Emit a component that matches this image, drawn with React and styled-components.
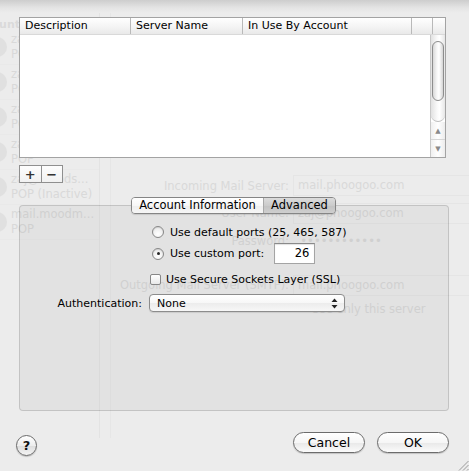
import React from 'react';
import styled, { createGlobalStyle } from 'styled-components';

const GlobalStyle = createGlobalStyle`
    html, body {
        margin: 0;
        padding: 0;
        background: #ececec;
    }
    body {
        font-family: "DejaVu Sans", "Liberation Sans", sans-serif;
        font-size: 11px;
        color: #000;
    }
`;

const Window = styled.div`
    position: relative;
    width: 469px;
    height: 471px;
    overflow: hidden;
    background: #ececec;
`;

/* ---------- faded preferences window behind the sheet ---------- */

const Backdrop = styled.div`
    display: flex;
    flex-direction: column;
    height: 100%;
    color: #d9d9d9;
`;

const TopShade = styled.div`
    height: 13px;
    flex: none;
    background: linear-gradient(#cdcdcd, #e4e4e4 60%, #ececec);
`;

const BackBody = styled.div`
    flex: 1;
    display: flex;
`;

const Sidebar = styled.div`
    width: 99px;
    flex: none;
    border-right: 1px solid #e3e3e3;
    height: 425px;
    overflow: hidden;
`;

const SideHead = styled.div`
    height: 17px;
    margin-left: -30px;
    line-height: 24px;
    font-weight: bold;
    color: #dadada;
`;

const AccountRow = styled.div`
    height: 35px;
    display: flex;
    align-items: center;
    gap: 4px;
    margin-left: -13px;
    border-bottom: 1px solid #e9e9e9;
    box-sizing: border-box;
`;

const AccountIcon = styled.div`
    width: 20px;
    height: 20px;
    border-radius: 50%;
    background: #e0e0e0;
    flex: none;
`;

const AccountText = styled.div`
    display: flex;
    flex-direction: column;
    line-height: 15px;
    white-space: nowrap;
    font-size: 11.5px;
`;

const BackMain = styled.div`
    flex: 1;
    margin-left: 10px;
    border-left: 1px solid #e6e6e6;
    height: 425px;
    padding-top: 159px;
    box-sizing: border-box;
`;

const GhostRow = styled.div`
    display: flex;
    align-items: center;
    height: ${p => p.h}px;
    white-space: nowrap;
    font-size: 11.5px;
`;

const GhostLabel = styled.div`
    width: 178px;
    flex: none;
    text-align: right;
    padding-right: 4px;
`;

const GhostField = styled.div`
    flex: 1;
    height: 19px;
    line-height: 19px;
    padding-left: 4px;
    border: 1px solid #e5e5e5;
    border-right: none;
`;

/* ---------- the sheet ---------- */

const Sheet = styled.div`
    position: absolute;
    inset: 0;
    padding: 17px 20px 0 19px;
    display: flex;
    flex-direction: column;
`;

const Table = styled.div`
    width: 427px;
    height: 141px;
    box-sizing: border-box;
    border: 1px solid #a3a3a3;
    background: #fff;
    display: flex;
    flex-direction: column;
    flex: none;
`;

const HeaderRow = styled.div`
    display: flex;
    height: 16px;
    flex: none;
    background: linear-gradient(#ffffff, #f4f4f4 55%, #e9e9e9);
    border-bottom: 1px solid #d9d9d9;
`;

const HeaderCell = styled.div`
    width: ${p => p.w}px;
    flex: ${p => (p.w ? 'none' : '1')};
    box-sizing: border-box;
    padding-left: 5px;
    line-height: 16px;
    border-right: ${p => (p.last ? 'none' : '1px solid #b9b9b9')};
    white-space: nowrap;
    overflow: hidden;
`;

const TableBody = styled.div`
    flex: 1;
    display: flex;
`;

const Rows = styled.div`
    flex: 1;
`;

const Scroller = styled.div`
    width: 14px;
    flex: none;
    display: flex;
    flex-direction: column;
    border-left: 1px solid #c8c8c8;
    background: #fff;
`;

const Track = styled.div`
    flex: 1;
    padding: 6px 1px 0 1px;
    background: linear-gradient(90deg, #e2e2e2, #fafafa 45%, #ffffff 60%, #e6e6e6);
    border-radius: 0 0 7px 7px;
    border-bottom: 1px solid #bdbdbd;
`;

const Thumb = styled.div`
    height: 60px;
    box-sizing: border-box;
    border: 1px solid #8d8d8d;
    border-radius: 6px;
    background: linear-gradient(90deg, #d8d8d8, #f7f7f7 40%, #ffffff 60%, #d4d4d4);
`;

const Arrow = styled.div`
    height: 17px;
    flex: none;
    display: flex;
    align-items: center;
    justify-content: center;
    border-top: ${p => (p.sep ? '1px solid #d6d6d6' : 'none')};
    background: linear-gradient(90deg, #f0f0f0, #ffffff 50%, #ececec);
    color: #8a8a8a;
    font-size: 7px;
`;

const ButtonBar = styled.div`
    display: flex;
    margin-top: 7px;
    width: 44px;
    height: 18px;
    box-sizing: border-box;
    border: 1px solid #8f8f8f;
    background: linear-gradient(#fdfdfd, #f1f1f1);
    flex: none;
`;

const SmallButton = styled.div`
    flex: 1;
    display: flex;
    align-items: center;
    justify-content: center;
    border-left: ${p => (p.sep ? '1px solid #8f8f8f' : 'none')};
    font-weight: bold;
    font-size: 13px;
    color: #333;
    line-height: 1;
`;

const TabStrip = styled.div`
    display: flex;
    justify-content: center;
    margin-top: 14px;
    position: relative;
    z-index: 1;
    flex: none;
`;

const TabGroup = styled.div`
    display: flex;
    height: 17px;
    box-sizing: border-box;
    border: 1px solid #858585;
    border-radius: 4px;
    overflow: hidden;
    margin-left: -1px;
    box-shadow: 0 1px 1px rgba(0, 0, 0, 0.12);
`;

const Tab = styled.div`
    width: ${p => p.w}px;
    box-sizing: border-box;
    text-align: center;
    line-height: 15px;
    font-size: 11.5px;
    border-left: ${p => (p.sep ? '1px solid #a9a9a9' : 'none')};
    background: ${p =>
        p.active
            ? 'linear-gradient(#dcdcdc, #cbcbcb 50%, #c2c2c2 51%, #cfcfcf)'
            : 'linear-gradient(#ffffff, #f7f7f7 50%, #eeeeee 51%, #f6f6f6)'};
`;

const Panel = styled.div`
    margin-top: -9px;
    height: 206px;
    box-sizing: border-box;
    border: 1px solid rgba(0, 0, 0, 0.14);
    border-radius: 4px;
    background: rgba(0, 0, 0, 0.038);
    padding-top: 18px;
    display: flex;
    flex-direction: column;
    flex: none;
`;

const OptionRow = styled.div`
    display: flex;
    align-items: center;
    height: ${p => p.h}px;
    margin-top: ${p => p.mt || 0}px;
    padding-left: ${p => p.indent}px;
    white-space: nowrap;
    gap: ${p => p.gap}px;
`;

const Radio = styled.div`
    width: 12px;
    height: 12px;
    box-sizing: border-box;
    border-radius: 50%;
    border: 1px solid #878787;
    background: radial-gradient(circle at 50% 70%, #ffffff, #e4e4e4);
    box-shadow: inset 0 1px 1px rgba(0, 0, 0, 0.1);
    display: flex;
    align-items: center;
    justify-content: center;
    flex: none;

    &::after {
        content: '';
        width: 3px;
        height: 3px;
        border-radius: 50%;
        background: ${p => (p.checked ? '#262626' : 'transparent')};
    }
`;

const Checkbox = styled.div`
    width: 11px;
    height: 11px;
    box-sizing: border-box;
    border: 1px solid #878787;
    border-radius: 2px;
    background: linear-gradient(#ffffff, #e9e9e9);
    flex: none;
`;

const PortInput = styled.div`
    width: 41px;
    height: 21px;
    box-sizing: border-box;
    margin-left: 4px;
    border: 1px solid #a4a4a4;
    border-top-color: #8a8a8a;
    background: #fff;
    box-shadow: inset 0 1px 1px rgba(0, 0, 0, 0.12);
    text-align: right;
    padding-right: 5px;
    line-height: 19px;
    font-size: 11.5px;
`;

const FieldLabel = styled.div`
    width: 122px;
    text-align: right;
    flex: none;
`;

const Popup = styled.div`
    width: 196px;
    height: 18px;
    box-sizing: border-box;
    border: 1px solid #8c8c8c;
    border-radius: 4px;
    background: linear-gradient(#ffffff, #f7f7f7 50%, #ececec 51%, #f7f7f7);
    display: flex;
    align-items: center;
    justify-content: space-between;
    padding: 0 6px 0 7px;
    box-shadow: 0 1px 1px rgba(0, 0, 0, 0.1);
`;

const Steppers = styled.svg`
    width: 7px;
    height: 11px;
    display: block;
`;

const Footer = styled.div`
    display: flex;
    align-items: flex-start;
    margin-top: 21px;
    flex: none;
`;

const HelpButton = styled.div`
    width: 21px;
    height: 21px;
    box-sizing: border-box;
    border-radius: 50%;
    border: 1px solid #6b6b6b;
    background: linear-gradient(#ffffff, #ededed 50%, #dcdcdc 51%, #f4f4f4);
    box-shadow: 0 1px 1px rgba(0, 0, 0, 0.2);
    margin: 3px 0 0 -3px;
    display: flex;
    align-items: center;
    justify-content: center;
    font-weight: bold;
    font-size: 13px;
    color: #111;
`;

const Spacer = styled.div`
    flex: 1;
`;

const PushButton = styled.div`
    width: 72px;
    height: 21px;
    box-sizing: border-box;
    margin-left: ${p => p.ml || 0}px;
    border-radius: 11px;
    border: 1px solid #6c6c6c;
    background: linear-gradient(#ffffff, #f6f6f6 50%, #e8e8e8 51%, #fbfbfb);
    box-shadow: 0 1px 1px rgba(0, 0, 0, 0.18);
    text-align: center;
    line-height: 19px;
    font-size: 12.5px;
`;

const Grip = styled.svg`
    position: absolute;
    right: 0;
    bottom: 0;
    width: 12px;
    height: 12px;
`;

const accounts = [
    ['zaj@phoogoo.com', 'POP'],
    ['zaj@mood.com', 'POP'],
    ['zaj@foo.com', 'POP'],
    ['zaj@mood.com', 'POP'],
    ['zaj@moods...', 'POP (Inactive)'],
    ['mail.moodm...', 'POP'],
];

const App = () => {
    return (
        <>
            <GlobalStyle />
            <Window>
                <Backdrop>
                    <TopShade />
                    <BackBody>
                        <Sidebar>
                            <SideHead>Accounts</SideHead>
                            {accounts.map(([name, type], idx) => (
                                <AccountRow key={idx}>
                                    <AccountIcon />
                                    <AccountText>
                                        <span>{name}</span>
                                        <span>{type}</span>
                                    </AccountText>
                                </AccountRow>
                            ))}
                        </Sidebar>
                        <BackMain>
                            <GhostRow h={27}>
                                <GhostLabel>Incoming Mail Server:</GhostLabel>
                                <GhostField>mail.phoogoo.com</GhostField>
                            </GhostRow>
                            <GhostRow h={28}>
                                <GhostLabel>User Name:</GhostLabel>
                                <GhostField>zaj@phoogoo.com</GhostField>
                            </GhostRow>
                            <GhostRow h={28}>
                                <GhostLabel>Password:</GhostLabel>
                                <span>&nbsp;&nbsp;••••••••••••</span>
                            </GhostRow>
                            <GhostRow h={16} />
                            <GhostRow h={28}>
                                <GhostLabel>Outgoing Mail Server (SMTP):</GhostLabel>
                                <GhostField>mail.phoogoo.com</GhostField>
                            </GhostRow>
                            <GhostRow h={20}>
                                <GhostLabel />
                                <span>&nbsp;&nbsp;&nbsp;&nbsp;&nbsp;Use only this server</span>
                            </GhostRow>
                        </BackMain>
                    </BackBody>
                </Backdrop>

                <Sheet>
                    <Table>
                        <HeaderRow>
                            <HeaderCell w={111}>Description</HeaderCell>
                            <HeaderCell w={112}>Server Name</HeaderCell>
                            <HeaderCell w={169}>In Use By Account</HeaderCell>
                            <HeaderCell w={21} />
                            <HeaderCell last />
                        </HeaderRow>
                        <TableBody>
                            <Rows />
                            <Scroller>
                                <Track>
                                    <Thumb />
                                </Track>
                                <Arrow>▲</Arrow>
                                <Arrow sep>▼</Arrow>
                            </Scroller>
                        </TableBody>
                    </Table>

                    <ButtonBar>
                        <SmallButton>+</SmallButton>
                        <SmallButton sep>−</SmallButton>
                    </ButtonBar>

                    <TabStrip>
                        <TabGroup>
                            <Tab w={131}>Account Information</Tab>
                            <Tab w={72} sep active>Advanced</Tab>
                        </TabGroup>
                    </TabStrip>

                    <Panel>
                        <OptionRow h={16} indent={132} gap={6}>
                            <Radio />
                            <span>Use default ports (25, 465, 587)</span>
                        </OptionRow>
                        <OptionRow h={21} mt={3} indent={132} gap={6}>
                            <Radio checked />
                            <span>Use custom port:</span>
                            <PortInput>26</PortInput>
                        </OptionRow>
                        <OptionRow h={16} mt={7} indent={130} gap={5}>
                            <Checkbox />
                            <span>Use Secure Sockets Layer (SSL)</span>
                        </OptionRow>
                        <OptionRow h={18} mt={7} indent={0} gap={7}>
                            <FieldLabel>Authentication:</FieldLabel>
                            <Popup>
                                <span>None</span>
                                <Steppers viewBox="0 0 7 11">
                                    <path d="M0.5 4 L3.5 0.5 L6.5 4 Z" fill="#222" />
                                    <path d="M0.5 7 L3.5 10.5 L6.5 7 Z" fill="#222" />
                                </Steppers>
                            </Popup>
                        </OptionRow>
                    </Panel>

                    <Footer>
                        <HelpButton>?</HelpButton>
                        <Spacer />
                        <PushButton>Cancel</PushButton>
                        <PushButton ml={12}>OK</PushButton>
                    </Footer>
                </Sheet>

                <Grip viewBox="0 0 12 12">
                    <path d="M11.5 2 L2 11.5 M11.5 6 L6 11.5 M11.5 10 L10 11.5" stroke="#9a9a9a" strokeWidth="1" />
                </Grip>
            </Window>
        </>
    );
};

export default App;
